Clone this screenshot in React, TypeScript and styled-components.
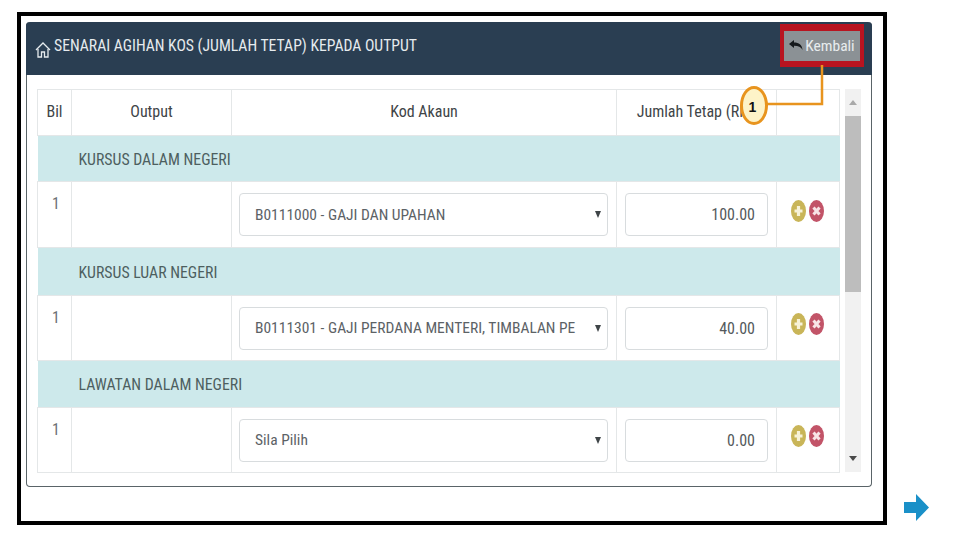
import React from "react";
import styled, { createGlobalStyle } from "styled-components";

const GlobalStyle = createGlobalStyle`
  html, body {
    margin: 0;
    padding: 0;
    background: #fff;
  }
  body {
    font-family: "Roboto", "Liberation Sans", sans-serif;
    font-stretch: 85%;
    color: #4a4f52;
  }
`;

const Page = styled.div`
  width: 960px;
  height: 540px;
  padding: 12px 0 0 17px;
  box-sizing: border-box;
  display: flex;
  align-items: flex-end;
  overflow: hidden;
`;

const Frame = styled.div`
  position: relative;
  width: 870px;
  height: 513px;
  box-sizing: border-box;
  border: 4px solid #000;
  padding: 6px 0 0 5px;
  flex-shrink: 0;
  margin-bottom: 15px;
`;

const NextArrow = styled.svg`
  width: 25px;
  height: 27px;
  margin: 0 0 19px 17px;
  flex-shrink: 0;
`;

const Panel = styled.section`
  width: 846px;
  height: 465px;
  box-sizing: border-box;
  border: 1px solid #5a6468;
  border-top: none;
  border-radius: 4px;
  background: #fff;
`;

const PanelHeader = styled.header`
  height: 53px;
  margin: 0 -1px;
  background: #2a3e52;
  border-radius: 4px 4px 0 0;
  display: flex;
  align-items: center;
  justify-content: space-between;
  padding: 0 8px 0 9px;
`;

const Title = styled.h1`
  margin: -6px 0 0;
  display: flex;
  align-items: center;
  gap: 3px;
  font-size: 15.7px;
  font-weight: 400;
  color: #e6ebee;
  white-space: nowrap;
`;

const BackButton = styled.button`
  width: 84px;
  height: 43px;
  margin-top: -7px;
  padding: 0;
  box-sizing: border-box;
  border: solid #b81420;
  border-width: 7px 4px 6px;
  background: #8b9195;
  color: #e8ecee;
  font: inherit;
  font-size: 15.5px;
  display: flex;
  align-items: center;
  justify-content: center;
  gap: 2px;
`;

const PanelBody = styled.div`
  display: flex;
  padding: 14px 11px 0 10px;
  gap: 5px;
`;

const Table = styled.table`
  width: 802px;
  border-collapse: collapse;
  table-layout: fixed;
  font-size: 15.7px;
`;

const HeadCell = styled.th`
  height: 46px;
  box-sizing: border-box;
  padding: 0 0 2px;
  border: 1px solid #e4e7e8;
  font-weight: 400;
  font-size: 16px;
  color: #3f4548;
  text-align: center;
`;

const GroupCell = styled.td<{ $label?: boolean }>`
  box-sizing: border-box;
  padding: 1px 0 0 ${(p) => (p.$label ? "7px" : "0")};
  background: #cde9eb;
  color: #4d5f60;
  font-size: 15.8px;
  white-space: nowrap;
`;

const Cell = styled.td<{ $height: number }>`
  height: ${(p) => p.$height}px;
  padding: 0 8px;
  border: 1px solid #e4e7e8;
  box-sizing: border-box;
  vertical-align: middle;
`;

const IndexCell = styled(Cell)`
  vertical-align: top;
  padding: 12px 0 0 14px;
  color: #6a6f72;
`;

const SelectBox = styled.div`
  height: 43px;
  box-sizing: border-box;
  margin-left: -1px;
  border: 1px solid #d8dcde;
  border-radius: 4px;
  padding: 0 6px 0 15px;
  display: flex;
  align-items: center;
  gap: 18px;
  color: #5c6266;
  font-size: 15.5px;
`;

const SelectValue = styled.span`
  flex: 1;
  overflow: hidden;
  white-space: nowrap;
`;

const Caret = styled.span`
  width: 0;
  height: 0;
  border-left: 3.5px solid transparent;
  border-right: 3.5px solid transparent;
  border-top: 7px solid #3f4548;
`;

const AmountBox = styled.div`
  height: 43px;
  box-sizing: border-box;
  border: 1px solid #d8dcde;
  border-radius: 4px;
  padding: 0 12px;
  display: flex;
  align-items: center;
  justify-content: flex-end;
  color: #54595c;
  font-size: 16px;
`;

const Actions = styled.div`
  display: flex;
  justify-content: center;
  gap: 3px;
  margin: -8px 0 0 -2px;
`;

const Scrollbar = styled.div`
  width: 16px;
  height: 383px;
  background: #f1f1f1;
  display: flex;
  flex-direction: column;
  align-items: center;
  justify-content: space-between;
`;

const ScrollArrow = styled.span<{ $down?: boolean }>`
  width: 0;
  height: 0;
  margin: ${(p) => (p.$down ? "0 0 11px" : "11px 0 0")};
  border-left: 4px solid transparent;
  border-right: 4px solid transparent;
  ${(p) => (p.$down ? "border-top: 5px solid #4a4a4a;" : "border-bottom: 5px solid #a9a9a9;")}
`;

const ScrollThumb = styled.div`
  width: 16px;
  height: 176px;
  margin-top: 11px;
  margin-bottom: auto;
  background: #bdbdbd;
`;

const Callout = styled.svg`
  position: absolute;
  left: 715px;
  top: 49px;
  width: 100px;
  height: 62px;
  overflow: visible;
`;

const CalloutBadge = styled.div`
  position: absolute;
  left: 719px;
  top: 70px;
  width: 28px;
  height: 39px;
  box-sizing: border-box;
  border: 3px solid #e8941e;
  border-radius: 50%;
  background: #fdf3c8;
  color: #111;
  padding: 2px 3px 0 0;
  font-family: "Liberation Sans", sans-serif;
  font-size: 14px;
  font-weight: 700;
  display: flex;
  align-items: center;
  justify-content: center;
`;

const HomeIcon = () => (
  <svg width="16" height="18" viewBox="0 0 16 18" fill="none" stroke="#e6ebee" strokeWidth="1.3" style={{ marginTop: 8 }}>
    <path d="M1 9 L8 2 L15 9" />
    <path d="M3 8 V16 H6.5 V11 H9.5 V16 H13 V8" />
  </svg>
);

const BackIcon = () => (
  <svg width="14" height="11" viewBox="0 0 14 11" fill="#15191c">
    <path d="M0 4 L5 0 V2.5 C10 2.5 13 4.5 13.5 10 C12 7 9.5 5.8 5 5.8 V8 Z" />
  </svg>
);

const RoundIcon = ({ color, plus }: { color: string; plus?: boolean }) => (
  <svg width="15" height="22" viewBox="0 0 15 22">
    <ellipse cx="7.5" cy="11" rx="7.5" ry="11" fill={color} />
    {plus ? (
      <path d="M7.5 6 V16 M3.5 11 H11.5" stroke="#f7f2d8" strokeWidth="3.2" />
    ) : (
      <path d="M4.5 7.5 L10.5 14.5 M10.5 7.5 L4.5 14.5" stroke="#f8e4e6" strokeWidth="3" />
    )}
  </svg>
);

type Row = { group: string; account: string; amount: string; height: number; groupHeight: number };

const rows: Row[] = [
  { group: "KURSUS DALAM NEGERI", account: "B0111000 - GAJI DAN UPAHAN", amount: "100.00", height: 66, groupHeight: 46 },
  { group: "KURSUS LUAR NEGERI", account: "B0111301 - GAJI PERDANA MENTERI, TIMBALAN PE", amount: "40.00", height: 65, groupHeight: 48 },
  { group: "LAWATAN DALAM NEGERI", account: "Sila Pilih", amount: "0.00", height: 65, groupHeight: 47 },
];

export default function App() {
  return (
    <Page>
      <GlobalStyle />
      <Frame>
        <Panel>
          <PanelHeader>
            <Title>
              <HomeIcon />
              SENARAI AGIHAN KOS (JUMLAH TETAP) KEPADA OUTPUT
            </Title>
            <BackButton>
              <BackIcon />
              Kembali
            </BackButton>
          </PanelHeader>
          <PanelBody>
            <Table>
              <colgroup>
                <col style={{ width: 34 }} />
                <col style={{ width: 160 }} />
                <col style={{ width: 385 }} />
                <col style={{ width: 160 }} />
                <col style={{ width: 63 }} />
              </colgroup>
              <thead>
                <tr>
                  <HeadCell>Bil</HeadCell>
                  <HeadCell>Output</HeadCell>
                  <HeadCell>Kod Akaun</HeadCell>
                  <HeadCell>Jumlah Tetap (RM)</HeadCell>
                  <HeadCell />
                </tr>
              </thead>
              <tbody>
                {rows.map((row) => (
                  <React.Fragment key={row.group}>
                    <tr style={{ height: row.groupHeight }}>
                      <GroupCell />
                      <GroupCell $label colSpan={4}>
                        {row.group}
                      </GroupCell>
                    </tr>
                    <tr>
                      <IndexCell $height={row.height}>1</IndexCell>
                      <Cell $height={row.height} />
                      <Cell $height={row.height}>
                        <SelectBox>
                          <SelectValue>{row.account}</SelectValue>
                          <Caret />
                        </SelectBox>
                      </Cell>
                      <Cell $height={row.height}>
                        <AmountBox>{row.amount}</AmountBox>
                      </Cell>
                      <Cell $height={row.height}>
                        <Actions>
                          <RoundIcon color="#c9b558" plus />
                          <RoundIcon color="#c25468" />
                        </Actions>
                      </Cell>
                    </tr>
                  </React.Fragment>
                ))}
              </tbody>
            </Table>
            <Scrollbar>
              <ScrollArrow />
              <ScrollThumb />
              <ScrollArrow $down />
            </Scrollbar>
          </PanelBody>
        </Panel>
        <Callout viewBox="0 0 100 62" fill="none">
          <path d="M86 0 V39 H25" stroke="#e8941e" strokeWidth="2.5" />
        </Callout>
        <CalloutBadge>1</CalloutBadge>
      </Frame>
      <NextArrow viewBox="0 0 25 27">
        <path d="M0 8 H12 V0 L25 13.5 L12 27 V19 H0 Z" fill="#1a90c8" />
      </NextArrow>
    </Page>
  );
}
